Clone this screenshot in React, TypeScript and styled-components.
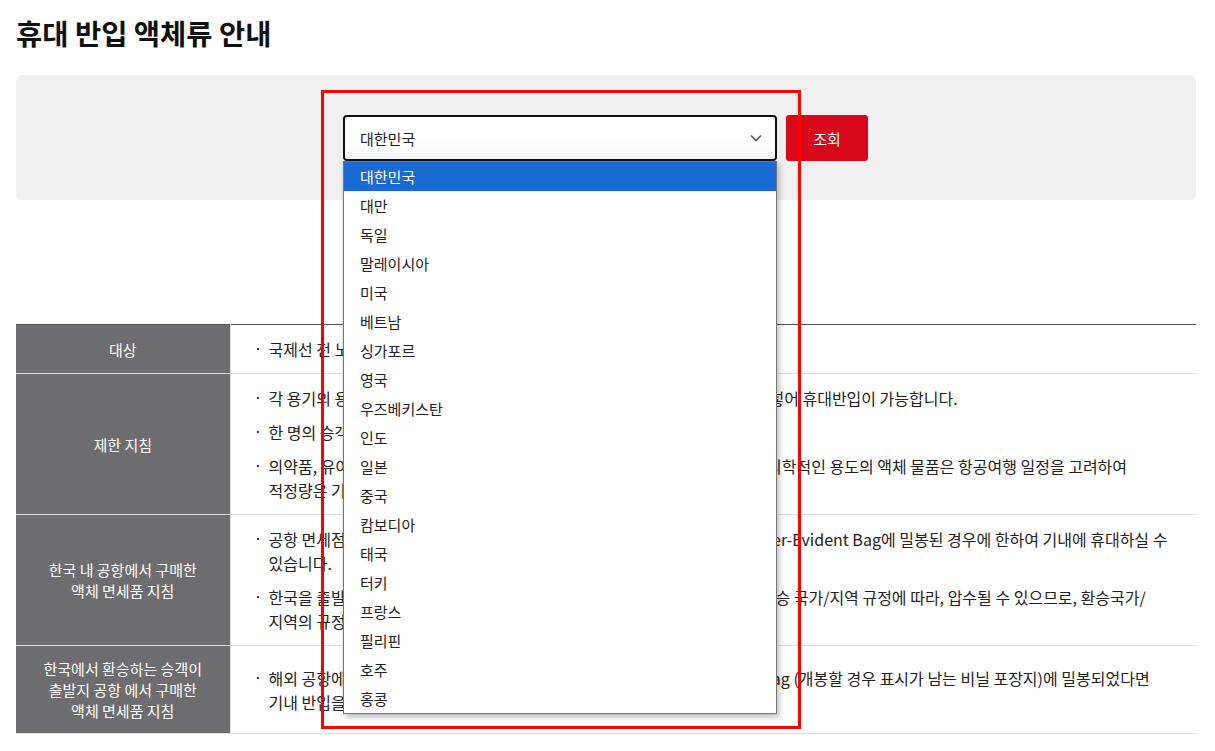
import styled, { createGlobalStyle } from 'styled-components';

const GlobalStyle = createGlobalStyle`
  * {
    box-sizing: border-box;
  }

  body {
    margin: 0;
    background: #fff;
    color: #222;
    font-family: 'Noto Sans CJK KR', 'Noto Sans', sans-serif;
  }
`;

const Page = styled.div`
  position: relative;
  width: 1215px;
  padding: 15px 19px 0 16px;
`;

const Title = styled.h2`
  margin: 0;
  font-size: 28.5px;
  line-height: 36px;
  font-weight: 700;
  color: #111;
`;

const SearchPanel = styled.div`
  margin-top: 24px;
  height: 125px;
  padding: 40px 1px 0 0;
  display: flex;
  justify-content: center;
  align-items: flex-start;
  gap: 9px;
  border-radius: 6px;
  background: #f0f0f0;
`;

const SelectWrap = styled.div`
  position: relative;
  width: 434px;
`;

const SelectBox = styled.div`
  height: 46px;
  padding: 0 13px 0 15px;
  display: flex;
  align-items: center;
  justify-content: space-between;
  border: 2px solid #111;
  border-radius: 4px;
  background: linear-gradient(#fff 55%, #f3f3f3);
  font-size: 15px;
  color: #222;
`;

const OptionList = styled.ul`
  position: absolute;
  top: 100%;
  left: 0;
  right: 0;
  z-index: 5;
  margin: 0;
  padding: 0;
  list-style: none;
  border: 1px solid #767676;
  background: #fff;
  box-shadow: 2px 3px 6px rgba(0, 0, 0, 0.28);
`;

const Option = styled.li<{ $active?: boolean }>`
  height: 29px;
  padding-left: 16px;
  display: flex;
  align-items: center;
  font-size: 15px;
  color: ${({ $active }) => ($active ? '#fff' : '#222')};
  background: ${({ $active }) => ($active ? '#1a6ad3' : 'transparent')};
`;

const SearchButton = styled.button`
  width: 82px;
  height: 46px;
  border: none;
  border-radius: 3px;
  background: #d7081a;
  color: #fff;
  font-family: inherit;
  font-size: 15px;
`;

const InfoTable = styled.table`
  width: 100%;
  margin-top: 124px;
  border-collapse: collapse;
  border-top: 1px solid #555;
`;

const Row = styled.tr`
  border-bottom: 1px solid #ddd;
`;

const HeadCell = styled.th`
  width: 214px;
  padding: 12px 10px;
  background: #6d6d6f;
  border-right: 1px solid #ddd;
  color: #fff;
  font-size: 15px;
  font-weight: 400;
  line-height: 21px;
  text-align: center;
  vertical-align: middle;
`;

const BodyCell = styled.td`
  padding: 12px 20px 12px 24px;
  vertical-align: middle;
`;

const Bullets = styled.ul`
  margin: 0;
  padding: 0;
  list-style: none;
  display: flex;
  flex-direction: column;
  gap: 10px;
`;

const Bullet = styled.li`
  position: relative;
  padding-left: 14px;
  font-size: 16px;
  line-height: 24px;
  color: #222;
  white-space: nowrap;

  &::before {
    content: '';
    position: absolute;
    left: 2px;
    top: 11px;
    width: 2px;
    height: 2px;
    background: #444;
  }
`;

const Highlight = styled.div`
  position: absolute;
  left: 321px;
  top: 90px;
  width: 480px;
  height: 639px;
  border: 3px solid #ff0000;
  pointer-events: none;
  z-index: 10;
`;

const countries = [
  '대한민국',
  '대만',
  '독일',
  '말레이시아',
  '미국',
  '베트남',
  '싱가포르',
  '영국',
  '우즈베키스탄',
  '인도',
  '일본',
  '중국',
  '캄보디아',
  '태국',
  '터키',
  '프랑스',
  '필리핀',
  '호주',
  '홍콩'
];

const Chevron = () => (
  <svg width='12' height='8' viewBox='0 0 12 8' fill='none'>
    <path d='M1 1.5L6 6.5L11 1.5' stroke='#555' strokeWidth='1.6' />
  </svg>
);

const App = () => (
  <>
    <GlobalStyle />
    <Page>
      <Title>휴대 반입 액체류 안내</Title>

      <SearchPanel>
        <SelectWrap>
          <SelectBox>
            <span>대한민국</span>
            <Chevron />
          </SelectBox>
          <OptionList>
            {countries.map((name, i) => (
              <Option key={name} $active={i === 0}>
                {name}
              </Option>
            ))}
          </OptionList>
        </SelectWrap>
        <SearchButton>조회</SearchButton>
      </SearchPanel>

      <InfoTable>
        <tbody>
          <Row>
            <HeadCell>대상</HeadCell>
            <BodyCell>
              <Bullets>
                <Bullet>국제선 전 노선 (국내선 제외)</Bullet>
              </Bullets>
            </BodyCell>
          </Row>
          <Row>
            <HeadCell>제한 지침</HeadCell>
            <BodyCell>
              <Bullets>
                <Bullet>
                  각 용기의 용량은 100 ml 이하여야 하며, 용량 1 L 이하의 투명 비닐 지퍼백에 넣어 휴대반입이 가능합니다.
                </Bullet>
                <Bullet>한 명의 승객당 1L 비닐 지퍼백 1개만 허용됩니다.</Bullet>
                <Bullet>
                  의약품, 유아용 음식(분유, 우유, 음료수 포함), 환자를 위한 특별식 등 그 밖의 의학적인 용도의 액체 물품은 항공여행 일정을 고려하여
                  <br />
                  적정량은 기내 반입이 가능합니다.
                </Bullet>
              </Bullets>
            </BodyCell>
          </Row>
          <Row>
            <HeadCell>
              한국 내 공항에서 구매한
              <br />
              액체 면세품 지침
            </HeadCell>
            <BodyCell>
              <Bullets>
                <Bullet>
                  공항 면세점에서 구입하신 액체류 면세품은 투명 봉인 봉투인 Security Tamper-Evident Bag에 밀봉된 경우에 한하여 기내에 휴대하실 수
                  <br />
                  있습니다.
                </Bullet>
                <Bullet>
                  한국을 출발하여 해외 공항에서 환승 시에 한국에서 구매하신 액체 면세품은 환승 국가/지역 규정에 따라, 압수될 수 있으므로, 환승국가/
                  <br />
                  지역의 규정을 반드시 확인하시기 바랍니다.
                </Bullet>
              </Bullets>
            </BodyCell>
          </Row>
          <Row>
            <HeadCell>
              한국에서 환승하는 승객이
              <br />
              출발지 공항 에서 구매한
              <br />
              액체 면세품 지침
            </HeadCell>
            <BodyCell>
              <Bullets>
                <Bullet>
                  해외 공항에서 구입한 액체 면세품은, 출발지의 Security Tamper-Evident Bag (개봉할 경우 표시가 남는 비닐 포장지)에 밀봉되었다면
                  <br />
                  기내 반입을 허용합니다.
                </Bullet>
              </Bullets>
            </BodyCell>
          </Row>
        </tbody>
      </InfoTable>

      <Highlight />
    </Page>
  </>
);

export default App;
